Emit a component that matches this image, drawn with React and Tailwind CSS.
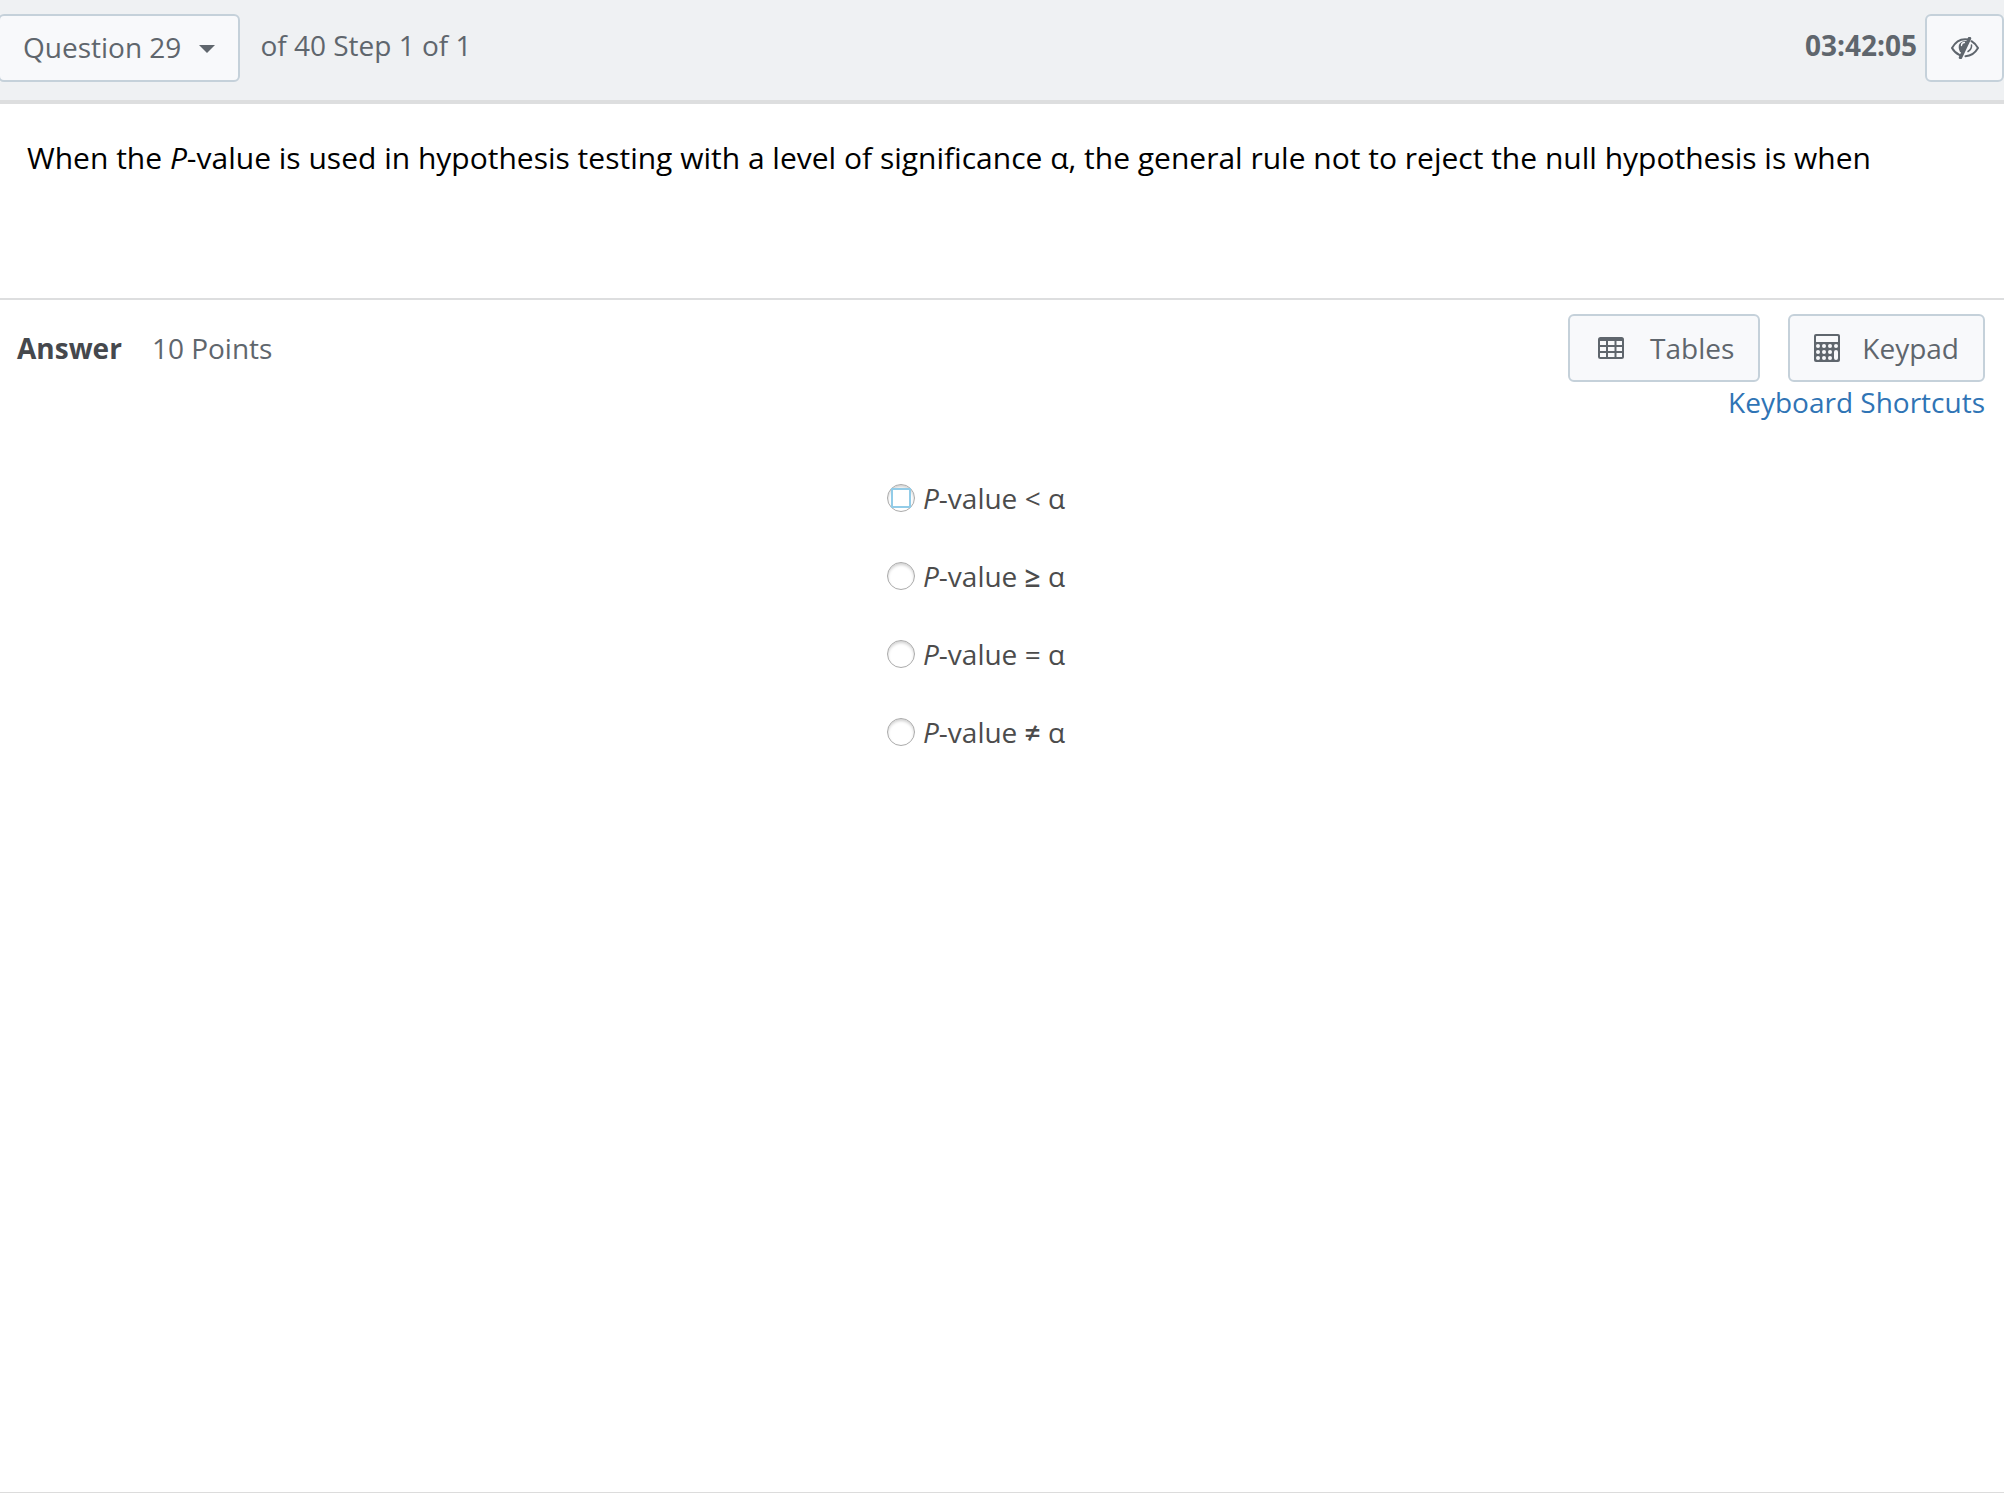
import { useState } from 'react'

const CHOICES = [
  { id: 'lt', sign: '<' },
  { id: 'ge', sign: '≥', heavy: true },
  { id: 'eq', sign: '=' },
  { id: 'ne', sign: '≠', heavy: true },
]

export default function App() {
  const [answer, setAnswer] = useState(null)
  const [active, setActive] = useState('lt')

  return (
    <div className="min-h-screen flex flex-col bg-white border-b border-[#dcdcdc] font-['Open_Sans','Noto_Sans',sans-serif] text-[28px] leading-10 text-[#5f666d]">
      <header className="flex items-start justify-between pt-3.5 pb-[18px] bg-[#eff1f3] border-b-4 border-[#dddedf]">
        <div className="flex items-start gap-5">
          <ToolButton className="-ml-0.5 px-[23px] pb-0.5 gap-[18px]">
            Question 29
            <svg width="16" height="8" viewBox="0 0 16 8" className="mt-1" aria-hidden="true">
              <path d="M0 0h16L8 8z" fill="currentColor" />
            </svg>
          </ToolButton>
          <p className="pt-[11px]">of 40 Step 1 of 1</p>
        </div>
        <div className="flex items-start gap-2">
          <p className="pt-[11px] font-bold">03:42:05</p>
          <ToolButton className="w-[79px] justify-center" aria-label="Hide timer">
            <EyeOffIcon />
          </ToolButton>
        </div>
      </header>

      <section className="px-[27px] pt-8 pb-[118px] border-b-2 border-[#dddedf] text-black text-[30px] leading-11">
        <p>
          When the <i>P</i>-value is used in hypothesis testing with a level of significance α, the general rule not to reject the null hypothesis is when
        </p>
      </section>

      <main className="flex-1 pt-3.5">
        <div className="flex items-start justify-between pl-[17px] pr-[19px]">
          <div className="flex items-center gap-[30px] h-17">
            <h2 className="font-bold text-[#45484d]">Answer</h2>
            <p>10 Points</p>
          </div>
          <div className="flex flex-col items-end">
            <div className="flex gap-7">
              <ToolButton className="pl-7 pr-6 gap-[26px]">
                <TableIcon />
                Tables
              </ToolButton>
              <ToolButton className="px-6 gap-[22px]">
                <KeypadIcon />
                Keypad
              </ToolButton>
            </div>
            <a href="#shortcuts" className="text-[#2f74b5]">Keyboard Shortcuts</a>
          </div>
        </div>

        <div className="flex justify-center pt-14 pr-13">
          <div className="flex flex-col gap-[38px] text-[#4c4c4c]" role="radiogroup" aria-label="Answer">
            {CHOICES.map((c) => (
              <label key={c.id} className="flex items-center gap-2">
                <span className="relative flex">
                  <input
                    type="radio"
                    name="answer"
                    value={c.id}
                    checked={answer === c.id}
                    onFocus={() => setActive(c.id)}
                    onChange={() => setAnswer(c.id)}
                    className="appearance-none w-7 h-7 rounded-full border border-[#ababab] bg-white shadow-[inset_0_2px_3px_rgba(0,0,0,0.18)] outline-none checked:bg-[#8ecbe6]"
                  />
                  {active === c.id && (
                    <span className="absolute inset-1 border-2 border-[#92cce8] bg-white pointer-events-none" />
                  )}
                </span>
                <span>
                  <i>P</i>-value <span className={c.heavy ? 'font-semibold' : ''}>{c.sign}</span> α
                </span>
              </label>
            ))}
          </div>
        </div>
      </main>
    </div>
  )
}

function ToolButton({ className, children, ...props }) {
  return (
    <button
      type="button"
      className={`flex items-center h-17 border-2 border-[#c5d1da] rounded-md bg-[#f8f9fb] ${className}`}
      {...props}
    >
      {children}
    </button>
  )
}

function TableIcon() {
  return (
    <svg width="26" height="22" viewBox="0 0 26 22" aria-hidden="true">
      <rect width="26" height="22" rx="2.5" fill="currentColor" />
      <g fill="#f8f9fb">
        {[4, 10, 16].map((y) => (
          <g key={y}>
            <rect x="2" y={y} width="6" height="4" />
            <rect x="10" y={y} width="6.5" height="4" />
            <rect x="18.5" y={y} width="5.5" height="4" />
          </g>
        ))}
      </g>
    </svg>
  )
}

function KeypadIcon() {
  return (
    <svg width="26" height="28" viewBox="0 0 26 28" aria-hidden="true">
      <rect width="26" height="28" rx="2" fill="currentColor" />
      <g fill="#f8f9fb">
        <rect x="2" y="2" width="22" height="6" rx="0.5" />
        {[12, 18, 24].map((y) => [4, 10, 16].map((x) => (
          <circle key={`${x}-${y}`} cx={x} cy={y} r="2" />
        )))}
        <circle cx="22" cy="12" r="2" />
        <rect x="20" y="16" width="4" height="10" rx="2" />
      </g>
    </svg>
  )
}

function EyeOffIcon() {
  return (
    <svg width="28" height="22" viewBox="0 0 28 22" fill="none" stroke="currentColor" strokeWidth="2" strokeLinecap="round" aria-hidden="true">
      <path d="M17.5 2.6C8 .8 3.500 6.500 1 11c1.800 3.200 4.200 5.500 7.800 7.200" />
      <path d="M20.500 4.200C23.500 6 25.500 8.200 27 11c-3 5.200-7 8-12.500 8.200" />
      <path d="M16 4C8.500 3 6 8.500 8.800 14.500L10.500 16z" fill="currentColor" stroke="none" />
      <path d="M13.500 5.500C11.500 5.500 10.500 7 10.500 8.500" stroke="#f8f9fb" strokeWidth="1.300" />
      <path d="M18.500 1.500L9.500 20.500" strokeWidth="3.400" />
      <path d="M20.500 8c.3 2.500-1 5-3.500 6.500" strokeWidth="1.500" />
    </svg>
  )
}
